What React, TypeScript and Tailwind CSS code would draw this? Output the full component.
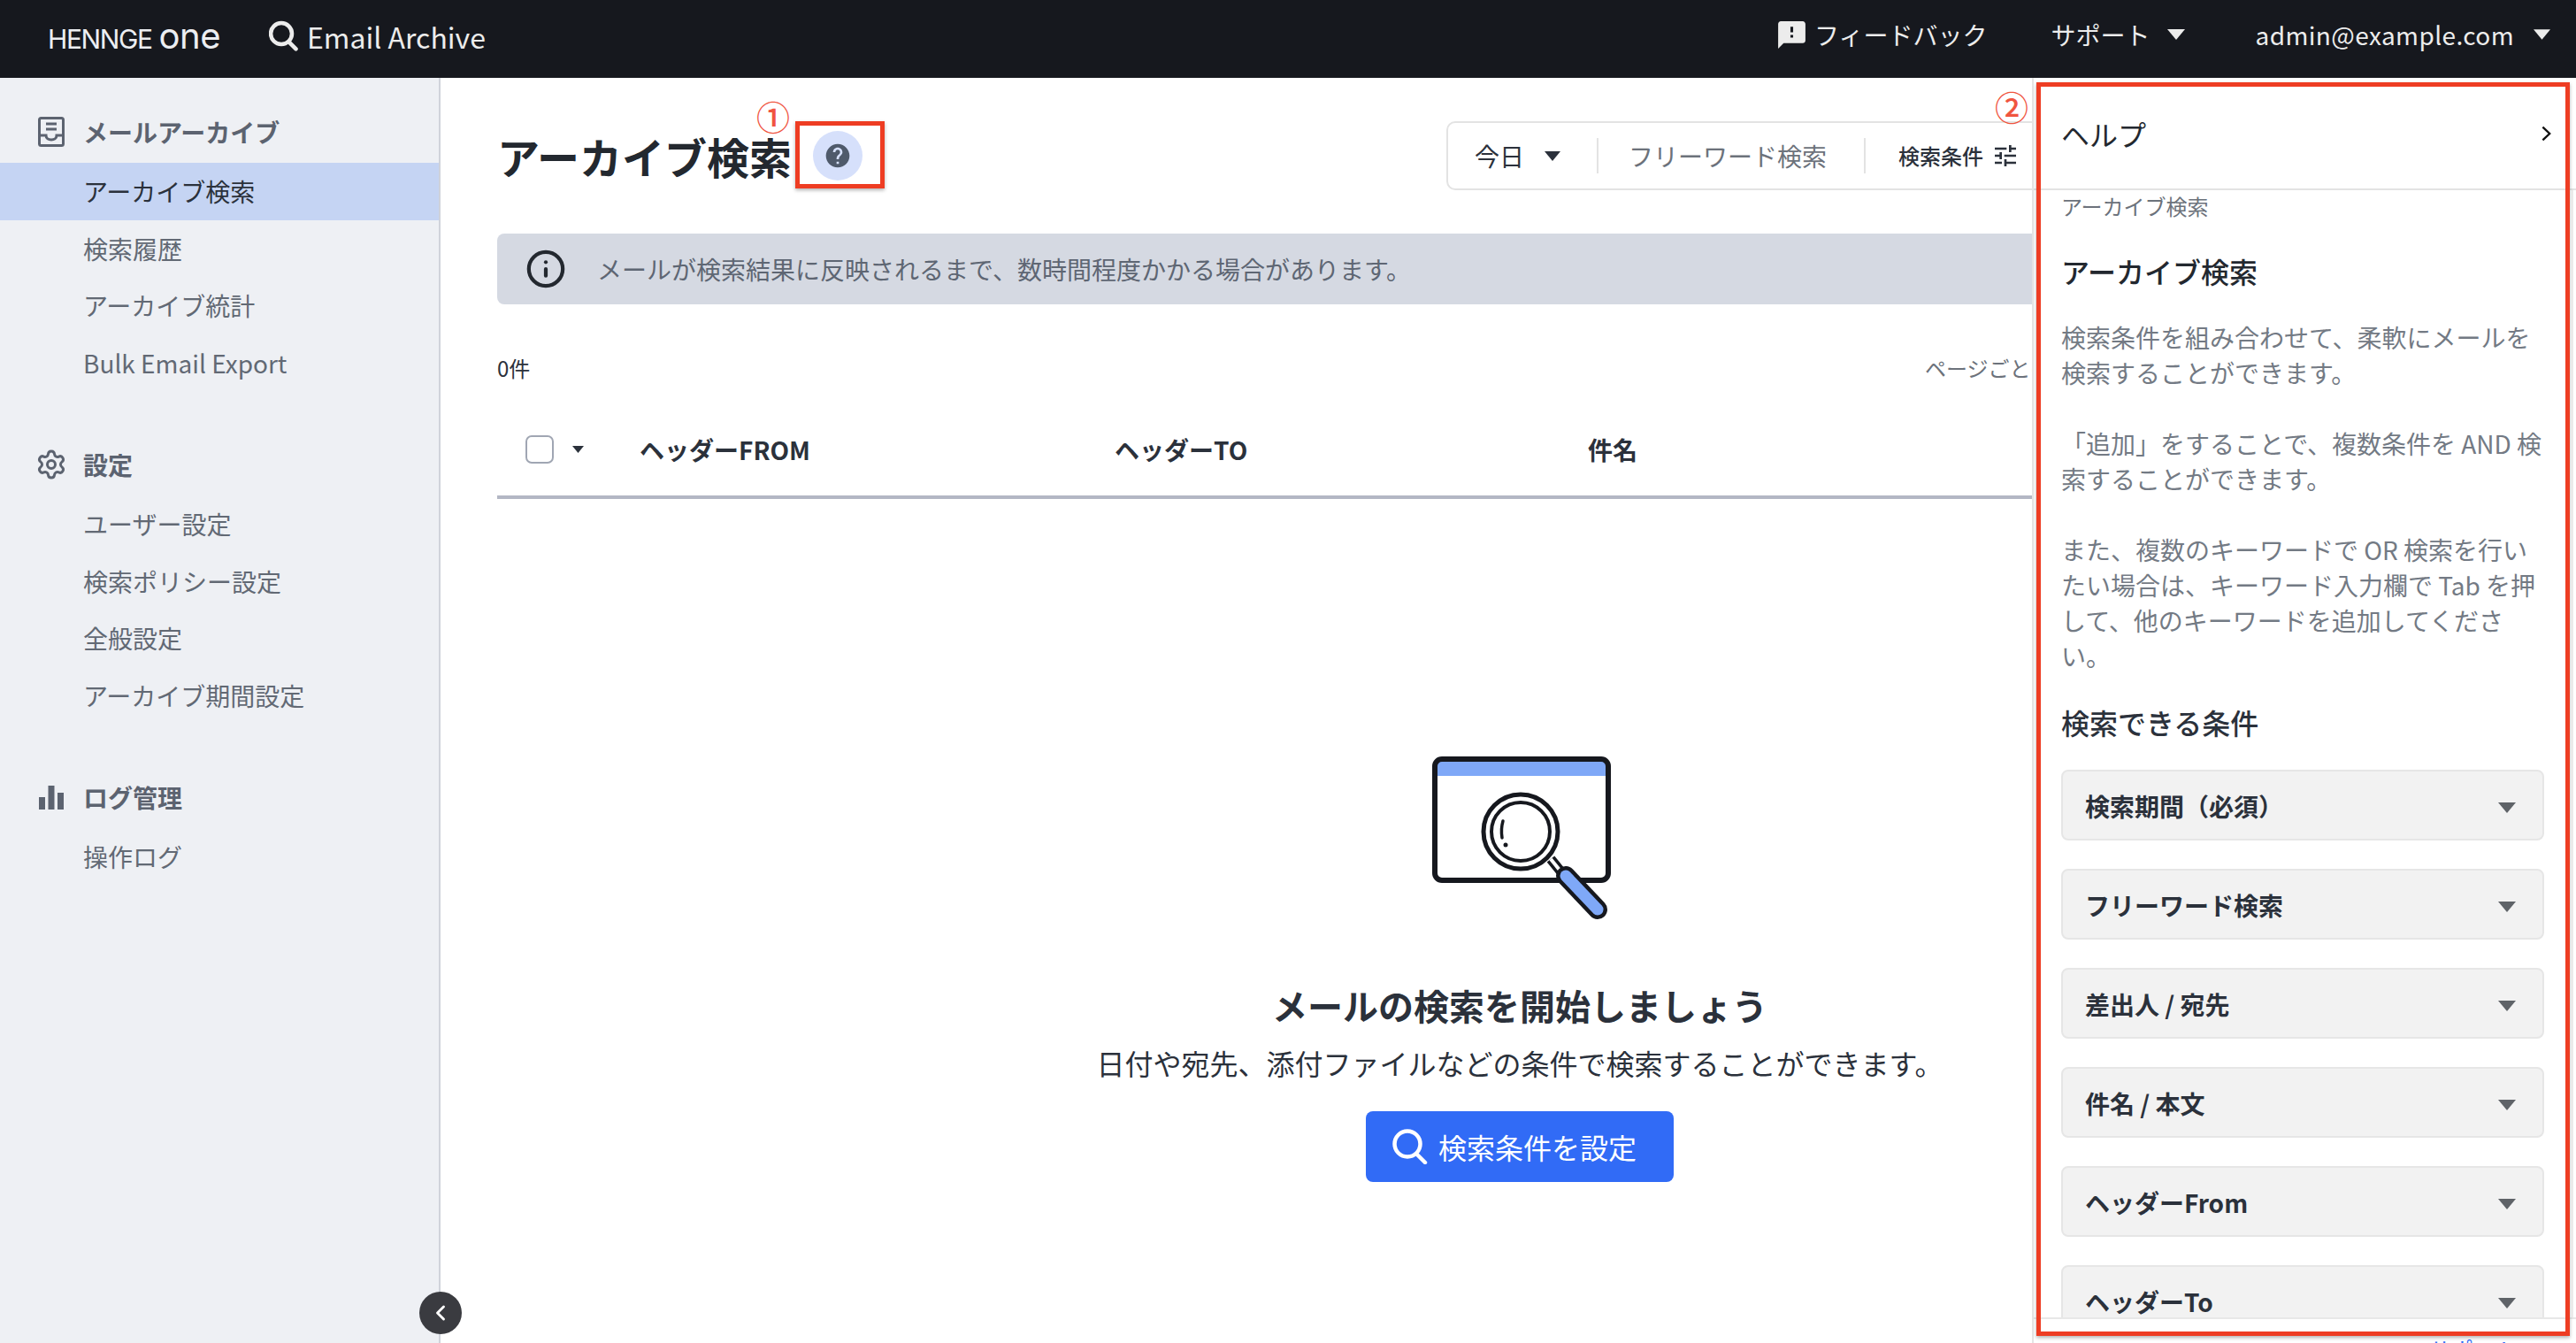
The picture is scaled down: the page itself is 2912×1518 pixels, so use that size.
import { ChevronLeft, Info, Settings } from "lucide-react";
import { MdFeedback, MdHelp, MdTune } from "react-icons/md";

const archiveItems = ["アーカイブ検索", "検索履歴", "アーカイブ統計", "Bulk Email Export"];
const settingItems = ["ユーザー設定", "検索ポリシー設定", "全般設定", "アーカイブ期間設定"];
const conditions = ["検索期間（必須）", "フリーワード検索", "差出人 / 宛先", "件名 / 本文", "ヘッダーFrom", "ヘッダーTo"];

function Caret({ className }: { className: string }) {
  return (
    <svg viewBox="0 0 20 12" className={className} fill="currentColor">
      <polygon points="0,0 20,0 10,12" />
    </svg>
  );
}

function SearchGlyph({ className, stroke }: { className: string; stroke: number }) {
  return (
    <svg viewBox="0 0 40 40" className={className} fill="none" stroke="currentColor" strokeWidth={stroke} strokeLinecap="round">
      <circle cx="17" cy="17" r="14.5" />
      <line x1="27" y1="28" x2="37" y2="38" />
    </svg>
  );
}

function ArchiveIcon() {
  return (
    <svg viewBox="0 0 30 34" className="w-[30px] h-[34px]" fill="none" stroke="currentColor" strokeWidth="3">
      <rect x="1.5" y="1.5" width="27" height="31" rx="2" />
      <path d="M9 8h12M9 14h12" />
      <path d="M2 21h7c0 3.5 3 5 6 5s6-1.5 6-5h7" />
    </svg>
  );
}

function BarsIcon() {
  return (
    <svg viewBox="0 0 28 27" className="w-[28px] h-[27px]" fill="currentColor">
      <rect x="0" y="13" width="7" height="14" />
      <rect x="10.5" y="0" width="7" height="27" />
      <rect x="21" y="8" width="7" height="19" />
    </svg>
  );
}

function NavGroup({ icon, title, items, active, className }: { icon: React.ReactNode; title: string; items: string[]; active?: string; className: string }) {
  return (
    <div className={className}>
      <div className="flex items-center h-[64px] mb-[3px] pl-[30px]">
        <div className="w-[56px] mr-[8px] flex justify-center text-[#5c6370]">{icon}</div>
        <span className="text-[28px] font-bold text-[#5c6370]">{title}</span>
      </div>
      {items.map(item => (
        <div
          key={item}
          className={`h-[64.5px] pl-[94px] flex items-center text-[28px] ${item === active ? "bg-[#c5d4f3] text-[#2b313b]" : "text-[#626974]"}`}
        >
          {item}
        </div>
      ))}
    </div>
  );
}

function EmptyIllustration() {
  return (
    <svg viewBox="0 0 220 190" className="w-[220px] h-[190px] ml-[4px]" fill="none">
      <rect x="12" y="8" width="196" height="137" rx="8" fill="#fff" />
      <path d="M12 27V16a8 8 0 0 1 8-8h180a8 8 0 0 1 8 8v11z" fill="#7fa8f7" />
      <rect x="12" y="8" width="196" height="137" rx="8" stroke="#16181e" strokeWidth="6" />
      <line x1="143" y1="121" x2="160" y2="142" stroke="#16181e" strokeWidth="11" />
      <line x1="143" y1="121" x2="160" y2="142" stroke="#fff" strokeWidth="4" />
      <line x1="160" y1="140" x2="196" y2="178" stroke="#16181e" strokeWidth="22" strokeLinecap="round" />
      <line x1="160" y1="140" x2="196" y2="178" stroke="#7fa8f7" strokeWidth="13" strokeLinecap="round" />
      <circle cx="109" cy="90" r="42" fill="#fff" stroke="#16181e" strokeWidth="5" />
      <circle cx="109" cy="90" r="33" stroke="#16181e" strokeWidth="4" />
      <path d="M89 78c-2 7-2 13-1 19" stroke="#16181e" strokeWidth="3.5" strokeLinecap="round" />
      <circle cx="92" cy="105" r="2.5" fill="#16181e" />
    </svg>
  );
}

export default function App() {
  return (
    <div className="relative w-[2912px] h-[1518px] overflow-hidden bg-white font-['Noto_Sans_CJK_JP','Noto_Sans',sans-serif] text-[#2b313b]">
      <header className="h-[88px] bg-[#16181e] text-[#ececec] flex items-center">
        <div className="ml-[54px] flex items-center w-[250px] h-full font-['Inter',sans-serif] text-[#eceef2]">
          <span className="text-[30px] tracking-[-1.4px] leading-none">HENNGE</span>
          <span className="ml-[8px] text-[40px] tracking-[-0.5px] leading-none mb-[7px]">one</span>
        </div>
        <SearchGlyph className="w-[33px] h-[35px] -translate-y-[4px]" stroke={5.5} />
        <span className="ml-[10px] text-[32px] -translate-y-[3px]">Email Archive</span>
        <div className="ml-auto flex items-center -translate-y-[5px]">
          <MdFeedback className="w-[37px] h-[37px]" />
          <span className="ml-[7px] text-[28px]">フィードバック</span>
          <span className="ml-[72px] text-[28px]">サポート</span>
          <Caret className="ml-[19px] w-[20px] h-[12px]" />
          <span className="ml-[80px] text-[28px] tracking-[0.4px]">admin@example.com</span>
          <Caret className="ml-[22px] mr-[29px] w-[19px] h-[12px]" />
        </div>
      </header>

      <div className="flex h-[1430px]">
        <aside className="w-[498px] shrink-0 bg-[#eef0f4] border-r-2 border-[#d0d3da] pt-[29px]">
          <NavGroup icon={<ArchiveIcon />} title="メールアーカイブ" items={archiveItems} active="アーカイブ検索" className="" />
          <NavGroup icon={<Settings size={36} />} title="設定" items={settingItems} className="mt-[51px]" />
          <NavGroup icon={<BarsIcon />} title="ログ管理" items={["操作ログ"]} className="mt-[51px]" />
        </aside>

        <main className="flex-1 min-w-0 overflow-hidden pl-[64px]">
          <div className="w-[1773px]">
            <div className="flex items-center mt-[49px] h-[78px]">
              <h1 className="text-[48px] font-bold text-[#23282f] leading-none">アーカイブ検索</h1>
              <div className="ml-[24px] w-[56px] h-[56px] rounded-full bg-[#d6e0fb] flex items-center justify-center">
                <MdHelp className="w-[32px] h-[32px] text-[#4f5a6b]" />
              </div>
              <div className="ml-auto w-[700px] h-[78px] border-2 border-[#e3e3e3] rounded-[10px] flex items-center">
                <div className="w-[170px] h-[40px] pl-[30px] flex items-center border-r-2 border-[#e3e3e3] text-[28px]">
                  今日
                  <Caret className="ml-[23px] w-[18px] h-[11px]" />
                </div>
                <div className="w-[302px] h-[40px] pl-[34px] flex items-center border-r-2 border-[#e3e3e3] text-[28px] text-[#6c727b]">
                  フリーワード検索
                </div>
                <div className="pl-[37px] flex items-center text-[24px] font-medium">
                  検索条件
                  <MdTune className="ml-[9px] w-[32px] h-[32px]" />
                </div>
              </div>
            </div>

            <div className="mt-[49px] h-[80px] rounded-lg bg-[#d5d9e2] flex items-center pl-[32px]">
              <Info size={46} strokeWidth={2.2} className="text-[#23282f]" />
              <span className="ml-[35px] text-[28px] text-[#5e6673]">
                メールが検索結果に反映されるまで、数時間程度かかる場合があります。
              </span>
            </div>

            <div className="mt-[54px] h-[36px] flex items-center justify-between text-[24px]">
              <span>0件</span>
              <span className="w-[159px] whitespace-nowrap text-[#6c727b]">ページごとの表示件数</span>
            </div>

            <div className="h-[130px] pt-[22px] border-b-4 border-[#b3b7c4] flex items-center pl-[32px] text-[28px] font-bold">
              <div className="w-[32px] h-[32px] rounded-[7px] border-2 border-[#a0a6b3] bg-white" />
              <Caret className="ml-[21px] w-[13px] h-[8px]" />
              <div className="ml-[63px] w-[537px]">ヘッダーFROM</div>
              <div className="w-[535px]">ヘッダーTO</div>
              <div>件名</div>
            </div>

            <div className="ml-[606px] w-[1100px] mt-[286px] flex flex-col items-center">
              <EmptyIllustration />
              <h2 className="mt-[66px] text-[40px] leading-[60px] font-bold">メールの検索を開始しましょう</h2>
              <p className="mt-[5px] text-[32px] leading-[60px]">日付や宛先、添付ファイルなどの条件で検索することができます。</p>
              <button className="mt-[25px] w-[348px] h-[80px] rounded-lg bg-[#316bf6] text-white flex items-center pl-[30px] text-[32px]">
                <SearchGlyph className="w-[40px] h-[40px]" stroke={4.5} />
                <span className="ml-[12px]">検索条件を設定</span>
              </button>
            </div>
          </div>
        </main>

        <section className="w-[615px] shrink-0 border-l-2 border-[#e5e5e5] bg-white flex flex-col">
          <div className="h-[127px] shrink-0 border-b-2 border-[#e3e3e3] pl-[31px] pr-[28px] flex items-center justify-between">
            <span className="text-[32px] text-[#23282f]">ヘルプ</span>
            <svg viewBox="0 0 12 18" className="w-[11px] h-[18px]" fill="none" stroke="#111" strokeWidth="2.6">
              <polyline points="1.5,1 10,9 1.5,17" />
            </svg>
          </div>
          <div className="h-[1274px] shrink-0 overflow-hidden mr-[3px] border-r-2 border-[#f0f0f0] pl-[31px]">
            <div className="text-[24px] leading-[36px] text-[#6c727b]">アーカイブ検索</div>
            <h3 className="mt-[31px] text-[32px] leading-[48px] font-medium text-[#23282f]">アーカイブ検索</h3>
            <div className="w-[546px] mt-[31px] text-[28px] leading-[40px] text-[#737a84]">
              <p>検索条件を組み合わせて、柔軟にメールを検索することができます。</p>
              <p className="mt-[40px]">「追加」をすることで、複数条件を AND 検索することができます。</p>
              <p className="mt-[40px]">また、複数のキーワードで OR 検索を行いたい場合は、キーワード入力欄で Tab を押して、他のキーワードを追加してください。</p>
            </div>
            <h3 className="mt-[31px] text-[32px] leading-[48px] font-medium text-[#2b313b]">検索できる条件</h3>
            <div className="mt-[30px] w-[546px] flex flex-col gap-[32px]">
              {conditions.map(label => (
                <div key={label} className="h-[80px] shrink-0 rounded-lg border-2 border-[#e6e6e6] bg-[#f2f2f2] flex items-center justify-between pl-[25px] pr-[30px] pt-[2px]">
                  <span className="text-[28px] font-bold">{label}</span>
                  <Caret className="w-[20px] h-[12px] text-[#5f6368] translate-y-[2px]" />
                </div>
              ))}
            </div>
          </div>
          <div className="flex-1 min-h-0 overflow-hidden border-t-2 border-[#e8e8e8] flex justify-end pr-[66px]">
            <span className="mt-[16px] text-[25px] leading-[36px] text-[#316bf6]">サポート</span>
          </div>
        </section>
      </div>

      <button className="absolute left-[474px] top-[1460px] w-[48px] h-[48px] rounded-full bg-[#3a3b40] text-white flex items-center justify-center">
        <ChevronLeft size={28} strokeWidth={2.5} />
      </button>

      <div className="absolute left-[899px] top-[137px] w-[101px] h-[76px] border-[5px] border-[#ee3d23] shadow-[0_2px_4px_rgba(0,0,0,0.3)]" />
      <div className="absolute left-[2302px] top-[93px] w-[603px] h-[1417px] border-[5px] border-[#ee3d23] shadow-[0_2px_4px_rgba(0,0,0,0.3)]" />
      <span className="absolute left-[855px] top-[103px] text-[38px] leading-[56px] font-medium text-[#f0553f]">①</span>
      <span className="absolute left-[2255px] top-[92px] text-[38px] leading-[56px] font-medium text-[#f0553f]">②</span>
    </div>
  );
}
